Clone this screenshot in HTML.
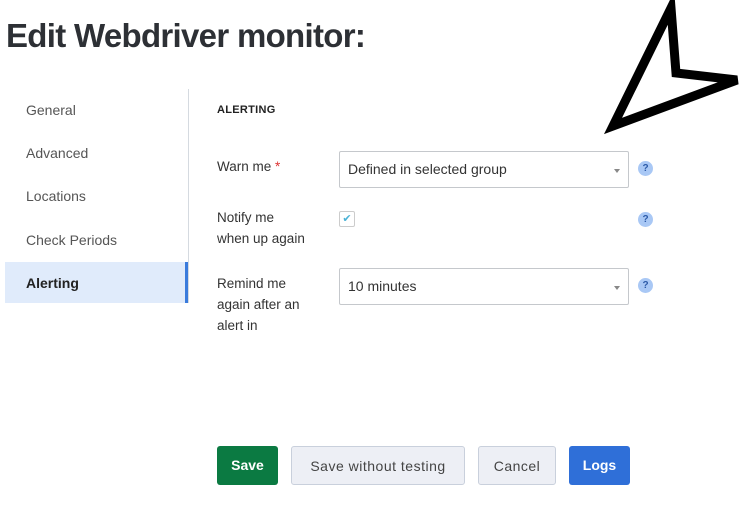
<!DOCTYPE html>
<html><head><style>
body{margin:0;width:743px;height:508px;background:#fff;font-family:"Liberation Sans",sans-serif;position:relative;overflow:hidden;color:#333}
.a{position:absolute}
h1{position:absolute;left:6px;top:17px;margin:0;font-size:33px;font-weight:bold;color:#2d3035;letter-spacing:-0.7px}
.nav{font-size:14px;color:#555;left:26px}
.lab{font-size:13.5px;color:#333;left:217px;line-height:21px}
.sel{left:339px;width:290px;border:1px solid #c5c8cc;border-radius:2px;font-size:14px;color:#333;box-sizing:border-box;padding-left:8px}
.sel:after{content:"";position:absolute;right:8px;top:50%;margin-top:-1px;border:3px solid transparent;border-top:4px solid #888}
.q{left:638px;width:15px;height:15px;border-radius:50%;background:#a9c8f5;color:#2d5ba8;font-size:10px;font-weight:bold;text-align:center;line-height:15px}
.btn{top:446px;height:39px;border-radius:3px;font-size:14px;text-align:center;line-height:39px;box-sizing:border-box}
</style></head><body>
<h1>Edit Webdriver monitor:</h1>
<svg class="a" style="left:0;top:0" width="743" height="140"><polygon points="671,8 676,73 737,80 613,126" fill="#fff" stroke="#000" stroke-width="9" stroke-linejoin="miter"/></svg>
<div class="a" style="left:188px;top:89px;width:1px;height:214px;background:#d5dae0"></div>
<div class="a nav" style="top:102px">General</div>
<div class="a nav" style="top:145px">Advanced</div>
<div class="a nav" style="top:188px">Locations</div>
<div class="a nav" style="top:232px">Check Periods</div>
<div class="a" style="left:5px;top:262px;width:180px;height:41px;background:#e0ebfb;border-right:3px solid #3a7bdc"></div>
<div class="a nav" style="top:275px;color:#222;font-weight:bold">Alerting</div>
<div class="a" style="left:217px;top:104px;font-size:11px;font-weight:bold;color:#222;letter-spacing:0.3px">ALERTING</div>
<div class="a lab" style="top:156px">Warn me <span style="color:#d33">*</span></div>
<div class="a sel" style="top:151px;height:37px;line-height:35px">Defined in selected group</div>
<div class="a q" style="top:161px">?</div>
<div class="a lab" style="top:207px">Notify me<br>when up again</div>
<div class="a" style="left:339px;top:211px;width:14px;height:14px;border:1px solid #ccc;border-radius:2px;color:#4bb3d6;font-size:11px;text-align:center;line-height:14px">✔</div>
<div class="a q" style="top:212px">?</div>
<div class="a lab" style="top:273px">Remind me<br>again after an<br>alert in</div>
<div class="a sel" style="top:268px;height:37px;line-height:35px">10 minutes</div>
<div class="a q" style="top:278px">?</div>
<div class="a btn" style="left:217px;width:61px;background:#0b7a42;color:#fff;font-weight:bold">Save</div>
<div class="a btn" style="left:291px;width:174px;background:#edeff5;border:1px solid #c9d0dc;color:#444;letter-spacing:0.5px">Save without testing</div>
<div class="a btn" style="left:478px;width:78px;background:#edeff5;border:1px solid #c9d0dc;color:#444;letter-spacing:0.5px">Cancel</div>
<div class="a btn" style="left:569px;width:61px;background:#2f6fd8;color:#fff;font-weight:bold">Logs</div>
</body></html>
